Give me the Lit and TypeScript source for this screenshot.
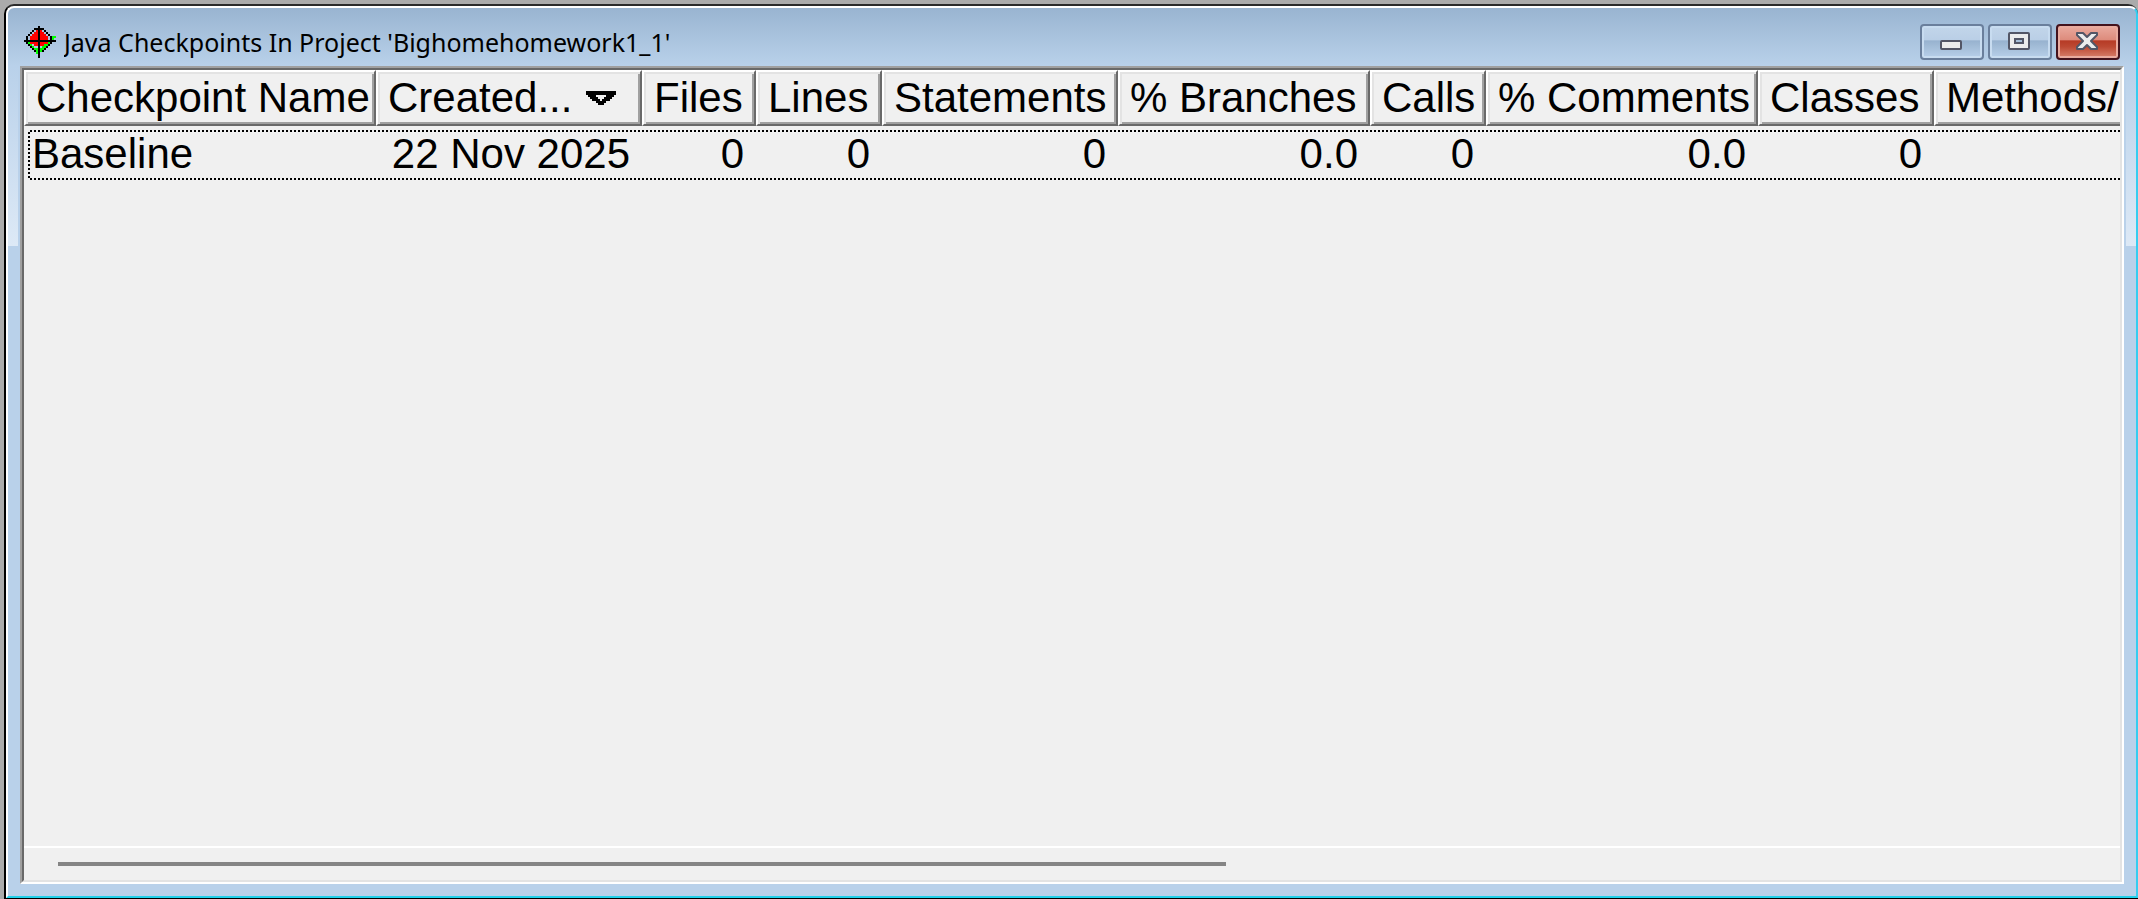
import { LitElement, html, css } from "lit";
import { customElement, state } from "lit/decorators.js";
import { styleMap } from "lit/directives/style-map.js";

interface Column {
  label: string;
  width: number;
  sorted?: boolean;
}

const COLUMNS: Column[] = [
  { label: "Checkpoint Name", width: 352 },
  { label: "Created...", width: 266, sorted: true },
  { label: "Files", width: 114 },
  { label: "Lines", width: 126 },
  { label: "Statements", width: 236 },
  { label: "% Branches", width: 252 },
  { label: "Calls", width: 116 },
  { label: "% Comments", width: 272 },
  { label: "Classes", width: 176 },
  { label: "Methods/", width: 310 },
];

const ROWS: string[][] = [
  ["Baseline", "22 Nov 2025", "0", "0", "0", "0.0", "0", "0.0", "0", ""],
];

@customElement("title-bar")
class TitleBar extends LitElement {
  static styles = css`
    :host {
      display: flex;
      align-items: flex-start;
      height: 58px;
      padding: 0 4px;
      margin: 0 12px;
      box-sizing: border-box;
    }
    .app-icon {
      flex: none;
      width: 32px;
      height: 32px;
      margin-top: 18px;
    }
    h1 {
      flex: 1;
      margin: 17px 0 0 8px;
      font: 400 25px/34px "Noto Sans", "Open Sans", sans-serif;
      color: #000;
      white-space: nowrap;
      overflow: hidden;
    }
    .controls {
      display: flex;
      gap: 4px;
      margin-top: 16px;
    }
    button {
      display: block;
      width: 64px;
      height: 36px;
      padding: 0;
      border: 2px solid #6a7f9c;
      border-radius: 4px;
      background: linear-gradient(#c2d6ea, #bacfe6 44%, #97b2cf 46%, #a0bad5 60%, #b8d0ea);
      box-shadow: inset 0 0 0 2px #c8dcf0;
    }
    .close {
      border-color: #43131d;
      background: linear-gradient(#eaaa9e, #dd8b7c 44%, #b63a25 46%, #bd4933 65%, #d8826e);
      box-shadow: inset 0 0 0 2px #e9ab9f;
    }
    button svg {
      display: block;
      width: 60px;
      height: 32px;
    }
  `;

  render() {
    return html`
      <svg class="app-icon" viewBox="0 0 16 16" shape-rendering="crispEdges" aria-hidden="true">
        <path fill="#0f0" d="M1 8H3V9H4V10H5V11H9V10H10V9H11V8H12V7H13V6H14V5H16V6H15V7H14V8H13V9H12V10H11V11H10V12H9V13H8V14H6V13H5V12H4V11H3V10H2V9H1Z" />
        <path fill="#f00" d="M6 2H9V3H10V4H11V5H12V9H10V10H5V9H3V5H4V4H5V3H6Z" />
        <path fill="#000" d="M7 0H8V16H7ZM0 7H16V8H0ZM5 1H7V2H5ZM4 2H5V3H4ZM3 3H4V4H3ZM2 4H3V5H2ZM1 5H2V7H1ZM8 1H10V2H8ZM10 2H11V3H10ZM11 3H12V4H11ZM12 4H13V5H12ZM13 5H14V7H13ZM1 8H2V9H1ZM2 9H3V10H2ZM3 10H4V11H3ZM4 11H5V12H4ZM5 12H6V13H5ZM13 8H14V9H13ZM12 9H13V10H12ZM11 10H12V11H11ZM10 11H11V12H10ZM9 12H10V13H9Z" />
      </svg>
      <h1>Java Checkpoints In Project 'Bighomehomework1_1'</h1>
      <div class="controls">
        <button type="button" aria-label="Minimize">
          <svg viewBox="0 0 60 32">
            <rect x="19" y="15" width="20" height="8" rx="1" fill="#ececec" stroke="#535666" stroke-width="2" />
          </svg>
        </button>
        <button type="button" aria-label="Maximize">
          <svg viewBox="0 0 60 32">
            <rect x="19" y="7" width="20" height="16" rx="1" fill="#ececec" stroke="#535666" stroke-width="2" />
            <rect x="25" y="13" width="8" height="4" fill="#a5bdd7" stroke="#535666" stroke-width="2" />
          </svg>
        </button>
        <button type="button" class="close" aria-label="Close">
          <svg viewBox="0 0 60 32">
            <path
              d="M19 7H25L29 11L33 7H39V9L33 15L39 21V23H33L29 19L25 23H19V21L25 15L19 9Z"
              fill="#ececec" stroke="#535666" stroke-width="2" stroke-linejoin="round"
            />
          </svg>
        </button>
      </div>
    `;
  }
}

@customElement("checkpoint-table")
class CheckpointTable extends LitElement {
  static styles = css`
    :host {
      display: block;
      overflow: hidden;
    }
    table {
      table-layout: fixed;
      border-collapse: separate;
      border-spacing: 0;
      font: 400 42px/48px "Liberation Sans", Arial, sans-serif;
      color: #000;
    }
    th,
    td {
      padding: 0;
      font-weight: 400;
      white-space: nowrap;
    }
    th button {
      display: flex;
      align-items: center;
      width: 100%;
      height: 56px;
      padding: 0 0 0 10px;
      border: 2px solid;
      border-color: #fff #696969 #696969 #fff;
      box-shadow: inset 2px 2px #e3e3e3, inset -2px -2px #a0a0a0;
      background: #f0f0f0;
      font: inherit;
      color: inherit;
      text-align: left;
    }
    .arrow {
      flex: none;
      width: 30px;
      height: 14px;
      margin-left: 14px;
    }
    td {
      height: 54px;
      padding: 2px 12px 0 0;
      box-sizing: border-box;
      line-height: 46px;
      text-align: right;
    }
    td:first-child {
      padding-left: 8px;
      text-align: left;
    }
    .focused {
      background:
        repeating-linear-gradient(90deg, #000 0 2px, transparent 2px 4px) 6px 4px / 100% 2px no-repeat,
        repeating-linear-gradient(90deg, #000 0 2px, transparent 2px 4px) 6px 52px / 100% 2px no-repeat,
        repeating-linear-gradient(#000 0 2px, transparent 2px 4px) 4px 6px / 2px 46px no-repeat;
    }
  `;

  @state() private focusedRow = 0;

  render() {
    const total = COLUMNS.reduce((sum, c) => sum + c.width, 0);
    return html`
      <table style=${styleMap({ width: `${total}px` })}>
        <colgroup>
          ${COLUMNS.map((c) => html`<col style=${styleMap({ width: `${c.width}px` })} />`)}
        </colgroup>
        <thead>
          <tr>
            ${COLUMNS.map(
              (c) => html`<th scope="col" aria-sort=${c.sorted ? "descending" : "none"}>
                <button type="button">
                  ${c.label}${c.sorted
                    ? html`<svg class="arrow" viewBox="0 0 15 7" shape-rendering="crispEdges" aria-hidden="true">
                        <path fill-rule="evenodd" d="M0 0H15V2H14V3H13V4H12V5H10V6H9V7H6V6H5V5H3V4H2V3H1V2H0ZM5 2V3H6V4H7V5H8V4H9V3H10V2Z" />
                      </svg>`
                    : ""}
                </button>
              </th>`
            )}
          </tr>
        </thead>
        <tbody>
          ${ROWS.map(
            (row, i) => html`<tr class=${i === this.focusedRow ? "focused" : ""} @click=${() => (this.focusedRow = i)}>
              ${row.map((cell) => html`<td>${cell}</td>`)}
            </tr>`
          )}
        </tbody>
      </table>
    `;
  }
}

@customElement("app-root")
class AppRoot extends LitElement {
  static styles = css`
    :host {
      display: flex;
      height: 100vh;
      padding: 4px 0 0 4px;
      box-sizing: border-box;
      background: #ababab;
    }
    .frame {
      flex: 1;
      min-width: 0;
      display: flex;
      border: solid #000;
      border-width: 2px 0 1px 2px;
      border-top-color: #2b2b2b;
      border-radius: 10px 10px 0 0;
      background: #2b2b2b;
    }
    .window {
      flex: 1;
      min-width: 0;
      display: flex;
      flex-direction: column;
      border: 2px solid;
      border-color: #fff #35cdf0 #22d0ea #fff;
      border-radius: 8px 8px 0 0;
      background:
        linear-gradient(#99b4d1, #b9d1ea) 0 0 / 100% 58px no-repeat,
        linear-gradient(#b9d1ea, #dde9f6) 0 58px / 10px 180px no-repeat,
        linear-gradient(#b9d1ea, #dde9f6) 100% 58px / 10px 180px no-repeat,
        #b9d1ea;
      background-origin: padding-box;
    }
    .client {
      flex: 1;
      min-height: 0;
      display: flex;
      flex-direction: column;
      margin: 0 12px 12px;
      border: 2px solid;
      border-color: #a0a0a0 #fff #fff #a0a0a0;
    }
    .view {
      flex: 1;
      min-height: 0;
      display: flex;
      flex-direction: column;
      border: 2px solid;
      border-color: #696969 #e3e3e3 #e3e3e3 #696969;
      background: #f0f0f0;
    }
    checkpoint-table {
      flex: 1;
      min-height: 0;
    }
    .scrollbar {
      height: 32px;
      padding: 0 34px;
      border-top: 2px solid #fff;
    }
    .thumb {
      height: 4px;
      margin-top: 14px;
      background: #858585;
    }
  `;

  @state() private visibleShare = 57.6;

  render() {
    return html`
      <div class="frame">
        <main class="window">
          <title-bar></title-bar>
          <div class="client">
            <div class="view">
              <checkpoint-table></checkpoint-table>
              <div class="scrollbar">
                <div class="thumb" style=${styleMap({ width: `${this.visibleShare}%` })}></div>
              </div>
            </div>
          </div>
        </main>
      </div>
    `;
  }
}
